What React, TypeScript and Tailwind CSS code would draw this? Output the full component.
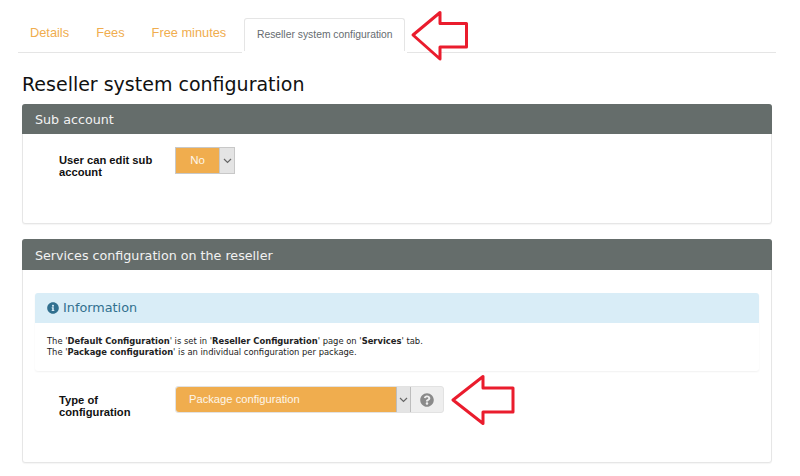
import React from "react";
import { FaInfoCircle, FaQuestionCircle } from "react-icons/fa";

const arial = "font-['Liberation_Sans',Arial,sans-serif]";
const dejavu = "font-['DejaVu_Sans',Verdana,sans-serif]";

function Chevron() {
  return (
    <svg width="9" height="6" viewBox="0 0 9 6" fill="none">
      <path d="M1 1 L4.5 4.5 L8 1" stroke="#666" strokeWidth="1.2" />
    </svg>
  );
}

function Panel({ title, children, className, headerClass }: { title: string; children: React.ReactNode; className: string; headerClass: string }) {
  return (
    <section className={`mx-[22px] w-[750px] rounded-[3px] border border-[#e6e6e6] bg-white shadow-[0_1px_1px_rgba(0,0,0,0.04)] flex flex-col ${className}`}>
      <h2 className={`${dejavu} -mx-px -mt-px shrink-0 rounded-t-[3px] bg-[#656d6b] pl-[13px] text-[12.7px] text-[#f2f2f2] ${headerClass}`}>
        {title}
      </h2>
      {children}
    </section>
  );
}

export default function App() {
  return (
    <div className={`${arial} relative h-[476px] w-[800px] overflow-hidden bg-white`}>
      <nav className="mx-[18px] flex h-[35px] w-[758px] mt-[18px] items-start border-b border-[#e5e5e5] text-[12.8px] text-[#f0ad4e]">
        <span className="ml-[12px] mt-[5px]">Details</span>
        <span className="ml-[27px] mt-[5px]">Fees</span>
        <span className="ml-[27px] mt-[5px]">Free minutes</span>
        <span className="ml-[16px] h-[35px] bg-white px-[2px]">
          <span className="flex h-[33px] w-[161px] items-center justify-center rounded-t-[3px] border border-b-0 border-[#e5e5e5] bg-white text-[10.35px] text-[#666c70]">
            Reseller system configuration
          </span>
        </span>
      </nav>

      <h1 className={`${dejavu} ml-[22px] mt-[18px] h-[33px] text-[19px] leading-[26px] text-[#111]`}>
        Reseller system configuration
      </h1>

      <Panel title="Sub account" className="h-[120px]" headerClass="h-[30px] leading-[31px]">
        <div className="flex pt-[13px]">
          <div className="ml-[36px] w-[116px] pt-[7px] text-[11.2px] font-bold leading-[12px] text-[#111]">
            User can edit sub<br />account
          </div>
          <div className="flex h-[27px] w-[60px] border border-[#c8c8c8]">
            <span className="flex w-[43px] items-center justify-center bg-[#f0ad4e] text-[11.5px] text-[#fdf6ea]">No</span>
            <span className="flex flex-1 items-center justify-center bg-[#e4e4e4] border-l border-[#c8c8c8]">
              <Chevron />
            </span>
          </div>
        </div>
      </Panel>

      <Panel title="Services configuration on the reseller" className="mt-[15px] h-[224px]" headerClass="h-[31px] leading-[33px]">
        <div className="mx-[12px] mt-[23px] h-[78px] rounded-[3px] shadow-[0_1px_2px_rgba(0,0,0,0.06)]">
          <div className={`${dejavu} flex h-[30px] items-center gap-[4px] rounded-t-[3px] bg-[#d9edf7] pl-[12px] text-[12.8px] text-[#31708f]`}>
            <FaInfoCircle size={12} color="#31708f" />
            Information
          </div>
          <div className={`${dejavu} pl-[12px] pt-[13px] text-[8.4px] leading-[11px] text-[#222]`}>
            <div>
              The '<b>Default Configuration</b>' is set in '<b>Reseller Configuration</b>' page on '<b>Services</b>' tab.
            </div>
            <div>
              The '<b>Package configuration</b>' is an individual configuration per package.
            </div>
          </div>
        </div>
        <div className="flex pt-[15px]">
          <div className="ml-[36px] w-[116px] pt-[8px] text-[11.2px] font-bold leading-[12px] text-[#111]">
            Type of<br />configuration
          </div>
          <div className="flex h-[27px] w-[269px] rounded-[3px] bg-[#eeeeee] border border-[#e2e2e2]">
            <span className="flex w-[220px] items-center rounded-l-[3px] bg-[#f0ad4e] pl-[13px] text-[11.2px] text-[#fdf6ea]">
              Package configuration
            </span>
            <span className="flex w-[15px] shrink-0 items-center justify-center bg-[#e4e4e4] border-x border-[#bdbdbd]">
              <Chevron />
            </span>
            <span className="flex flex-1 items-center justify-center">
              <FaQuestionCircle size={14} color="#8a8a8a" />
            </span>
          </div>
        </div>
      </Panel>

      <svg className="absolute left-[410px] top-[10px]" width="60" height="52" viewBox="0 0 60 52" fill="none">
        <path d="M3 25 L30 2.5 L30 13.5 L56.5 13.5 L56.5 37 L30 37 L30 49 Z" stroke="#ea1c2d" strokeWidth="3" strokeLinejoin="round" fill="#fff" />
      </svg>
      <svg className="absolute left-[450px] top-[374px]" width="66" height="52" viewBox="0 0 66 52" fill="none">
        <path d="M3 26 L33 2.5 L33 14 L63 14 L63 38 L33 38 L33 49.5 Z" stroke="#ea1c2d" strokeWidth="3" strokeLinejoin="round" fill="#fff" />
      </svg>
    </div>
  );
}
